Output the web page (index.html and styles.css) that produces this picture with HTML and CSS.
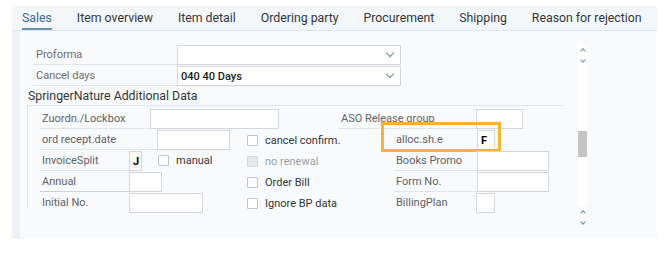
FILE: index.html
```html
<!DOCTYPE html>
<html lang="en">
  <head>
    <meta charset="UTF-8" />
    <title>Sales</title>
    <link rel="stylesheet" href="styles.css">
  </head>
  <body>
  <div class="panel">
    <div class="tabs">
      <span class="tab active">Sales</span>
      <span class="tab">Item overview</span>
      <span class="tab">Item detail</span>
      <span class="tab">Ordering party</span>
      <span class="tab">Procurement</span>
      <span class="tab">Shipping</span>
      <span class="tab">Reason for rejection</span>
    </div>
    <div class="body">
      <div class="strip"></div>
      <div class="main">
        <div class="top-form">
          <div class="row">
            <span class="lbl lbl-top">Proforma</span>
            <span class="input select"><span class="chev"></span></span>
          </div>
          <div class="row">
            <span class="lbl lbl-top">Cancel days</span>
            <span class="input select"><span class="val">040 40 Days</span><span class="chev"></span></span>
          </div>
        </div>
        <div class="group-title">SpringerNature Additional Data</div>
        <div class="group">
          <div class="row">
            <span class="lbl w110">Zuordn./Lockbox</span>
            <span class="input w129"></span>
            <span class="lbl w137 ml60">ASO Release group</span>
            <span class="input w47"></span>
          </div>
          <div class="row">
            <div class="cell-a">
              <span class="lbl w117">ord recept.date</span>
              <span class="input w73"></span>
            </div>
            <div class="cell-b">
              <span class="check"></span><span class="ctext">cancel confirm.</span>
            </div>
            <div class="cell-c">
              <span class="lbl w83">alloc.sh.e</span>
              <span class="input w18"><span class="val bold">F</span></span>
              <span class="highlight"></span>
            </div>
          </div>
          <div class="row">
            <div class="cell-a">
              <span class="lbl w89">InvoiceSplit</span>
              <span class="input w13"><span class="val bold">J</span></span>
              <span class="check ml16"></span><span class="ctext">manual</span>
            </div>
            <div class="cell-b">
              <span class="check disabled"></span><span class="ctext muted">no renewal</span>
            </div>
            <div class="cell-c">
              <span class="lbl w83">Books Promo</span>
              <span class="input w72"></span>
            </div>
          </div>
          <div class="row">
            <div class="cell-a">
              <span class="lbl w89 dark-line">Annual</span>
              <span class="input w33"></span>
            </div>
            <div class="cell-b">
              <span class="check"></span><span class="ctext">Order Bill</span>
            </div>
            <div class="cell-c">
              <span class="lbl w83">Form No.</span>
              <span class="input w72"></span>
            </div>
          </div>
          <div class="row">
            <div class="cell-a">
              <span class="lbl w89 no-line">Initial No.</span>
              <span class="input w74"></span>
            </div>
            <div class="cell-b">
              <span class="check"></span><span class="ctext">Ignore BP data</span>
            </div>
            <div class="cell-c">
              <span class="lbl w82 no-line">BillingPlan</span>
              <span class="input w19"></span>
            </div>
          </div>
        </div>
      </div>
      <div class="scroll">
        <div class="track">
          <span class="arr up"></span>
          <span class="arr down"></span>
          <div class="thumb"></div>
        </div>
        <div class="arrows-bottom">
          <span class="arr up"></span>
          <span class="arr down"></span>
        </div>
      </div>
    </div>
  </div>
  </body>
</html>
```

FILE: styles.css
```css
body
{
    margin: 0;
    background: #ffffff;
    font-family: Roboto, "Noto Sans", sans-serif;
    color: #32363a;
}

.panel
{
    margin: 6px 0 0 12px;
    width: 645px;
    height: 233px;
    background: #f9fafc;
    display: flex;
    flex-direction: column;
}

.tabs
{
    display: flex;
    height: 24px;
    padding-left: 10px;
    gap: 25px;
    background: #f4f7fa;
    border-bottom: 1px solid #dde5ee;
    font-size: 12.3px;
}

.tab
{
    line-height: 24px;
    white-space: nowrap;
}

.tab.active
{
    color: #3a6a97;
    box-shadow: inset 0 -2px 0 #6990b5;
}

.body
{
    flex: 1;
    display: flex;
}

.strip
{
    width: 8px;
    background: #eff3f7;
}

.main
{
    width: 558px;
    padding-top: 14px;
}

.top-form
{
    padding-left: 13px;
}

.row
{
    display: flex;
    align-items: flex-start;
    height: 21px;
    font-size: 11px;
}

.lbl
{
    box-sizing: border-box;
    height: 20px;
    padding-top: 1px;
    line-height: 18px;
    padding-left: 2px;
    color: #5e6266;
    border-bottom: 1px solid #e2e4e6;
    white-space: nowrap;
}

.lbl-top
{
    width: 144px;
    padding-left: 3px;
    color: #6a6d70;
}

.dark-line
{
    border-bottom-color: #cfd2d5;
}

.no-line
{
    border-bottom-color: transparent;
}

.input
{
    box-sizing: border-box;
    height: 20px;
    background: #ffffff;
    border: 1px solid #d3d7db;
    position: relative;
    display: flex;
    align-items: center;
}

.input .val
{
    padding-left: 3px;
    font-size: 11px;
    font-weight: 500;
    color: #1a1a1a;
}

.input .val.bold
{
    font-weight: 700;
    color: #000;
}

.select
{
    width: 224px;
}

.chev
{
    position: absolute;
    right: 7px;
    top: 4px;
    width: 5px;
    height: 5px;
    border-right: 1px solid #6f8399;
    border-bottom: 1px solid #6f8399;
    transform: rotate(45deg);
}

.group-title
{
    margin: 1px 0 0 8px;
    height: 17px;
    line-height: 17px;
    font-size: 12.3px;
    color: #32363a;
}

.group
{
    margin-left: 7px;
    width: 537px;
    height: 104px;
    box-sizing: border-box;
    border-top: 1px solid #e4e6e8;
    border-left: 1px solid #e4e6e8;
    padding: 3px 0 0 12px;
}

.cell-a
{
    width: 207px;
    display: flex;
    align-items: flex-start;
}

.cell-b
{
    width: 147px;
    display: flex;
    align-items: center;
    height: 20px;
}

.cell-c
{
    display: flex;
    align-items: flex-start;
    position: relative;
}

.check
{
    box-sizing: border-box;
    width: 11px;
    height: 11px;
    border: 1px solid #c2c6ca;
    border-radius: 1px;
    background: #ffffff;
    margin-top: 4px;
    flex-shrink: 0;
}

.cell-b .check
{
    margin-top: 0;
}

.check.disabled
{
    background: #e6e8ea;
    border-color: #d6d9dc;
}

.ctext
{
    margin-left: 7px;
    line-height: 19px;
    white-space: nowrap;
}

.muted
{
    color: #9a9ea2;
}

.ml16 { margin-left: 16px; }
.ml60 { margin-left: 60px; }
.w13 { width: 13px; }
.w18 { width: 18px; }
.w19 { width: 19px; }
.w33 { width: 33px; }
.w47 { width: 47px; }
.w72 { width: 72px; }
.w73 { width: 73px; }
.w74 { width: 74px; }
.w82 { width: 82px; }
.w83 { width: 83px; }
.w89 { width: 89px; }
.w110 { width: 110px; }
.w117 { width: 117px; }
.w129 { width: 129px; }
.w137 { width: 137px; }

.highlight
{
    position: absolute;
    left: -13px;
    top: -8px;
    width: 120px;
    height: 30px;
    box-sizing: border-box;
    border: 3px solid #f7b52a;
}

.scroll
{
    width: 9px;
    padding-top: 12px;
    display: flex;
    flex-direction: column;
}

.track
{
    height: 160px;
    background: #ffffff;
    position: relative;
    display: flex;
    flex-direction: column;
    align-items: center;
    padding-top: 3px;
}

.thumb
{
    position: absolute;
    left: 0;
    top: 88px;
    width: 9px;
    height: 26px;
    background: #c4c4c4;
}

.arrows-bottom
{
    display: flex;
    flex-direction: column;
    align-items: center;
    padding-top: 2px;
}

.arr
{
    width: 3px;
    height: 3px;
    border-left: 1px solid #6f8aa6;
    border-top: 1px solid #6f8aa6;
    margin: 3px 0;
}

.arr.up
{
    transform: rotate(45deg);
    margin-top: 3px;
}

.arr.down
{
    transform: rotate(225deg);
    margin-top: 2px;
}
```
